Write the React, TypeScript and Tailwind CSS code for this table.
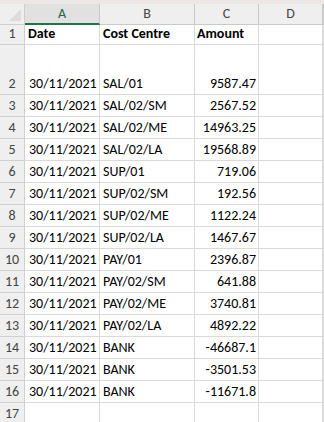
import React from 'react';

const rows: [string, string, string][] = [
  ['30/11/2021', 'SAL/01', '9587.47'],
  ['30/11/2021', 'SAL/02/SM', '2567.52'],
  ['30/11/2021', 'SAL/02/ME', '14963.25'],
  ['30/11/2021', 'SAL/02/LA', '19568.89'],
  ['30/11/2021', 'SUP/01', '719.06'],
  ['30/11/2021', 'SUP/02/SM', '192.56'],
  ['30/11/2021', 'SUP/02/ME', '1122.24'],
  ['30/11/2021', 'SUP/02/LA', '1467.67'],
  ['30/11/2021', 'PAY/01', '2396.87'],
  ['30/11/2021', 'PAY/02/SM', '641.88'],
  ['30/11/2021', 'PAY/02/ME', '3740.81'],
  ['30/11/2021', 'PAY/02/LA', '4892.22'],
  ['30/11/2021', 'BANK', '-46687.1'],
  ['30/11/2021', 'BANK', '-3501.53'],
  ['30/11/2021', 'BANK', '-11671.8'],
];

const cell = 'border-r border-b border-[#dadada] flex items-end pb-[2px] whitespace-nowrap overflow-hidden';
const rowHead =
  'border-r border-b border-[#cfcfcf] bg-[#efefef] flex items-end justify-center pb-[2px] text-[14px] text-[#444]';
const colHead =
  'border-r border-b border-[#c9c9c9] bg-[#efefef] flex items-center justify-center text-[14px] text-[#444]';

const App: React.FC = () => {
  return (
    <div className="w-[324px] h-[422px] overflow-hidden bg-white font-['Carlito','Liberation_Sans',Arial,sans-serif] text-[14px] leading-[16px] text-black">
      <div className="h-[4px] bg-[#ebe7e7]"></div>
      <div className="grid grid-cols-[25px_75px_95px_64px_64px_1fr] grid-rows-[21px_20px_50px_repeat(15,22px)]">
        {/* header row */}
        <div className="border-r border-b border-[#cfcfcf] bg-[#efefef] relative">
          <svg width="24" height="20" className="absolute left-0 top-0">
            <polygon points="9,17 21,17 21,5" fill="#dcdcdc" />
          </svg>
        </div>
        <div className="border-r border-[#c9c9c9] border-b-2 border-b-[#217346] bg-[#e1e1e1] flex items-center justify-center text-[14px] text-[#1f6b41]">
          A
        </div>
        <div className={colHead}>B</div>
        <div className={colHead}>C</div>
        <div className={colHead}>D</div>
        <div className={colHead}></div>

        {/* row 1 */}
        <div className={rowHead}>1</div>
        <div className={`${cell} pl-[3px] font-bold`}>Date</div>
        <div className={`${cell} pl-[3px] font-bold`}>Cost Centre</div>
        <div className={`${cell} pl-[2px] font-bold`}>Amount</div>
        <div className={cell}></div>
        <div className={cell}></div>

        {rows.map((r, i) => (
          <React.Fragment key={i}>
            <div className={rowHead}>{i + 2}</div>
            <div className={`${cell} pl-[4px]`}>{r[0]}</div>
            <div className={`${cell} pl-[3px]`}>{r[1]}</div>
            <div className={`${cell} justify-end pr-[2px]`}>{r[2]}</div>
            <div className={cell}></div>
            <div className={cell}></div>
          </React.Fragment>
        ))}

        {/* row 17 */}
        <div className={rowHead}>17</div>
        <div className={cell}></div>
        <div className={cell}></div>
        <div className={cell}></div>
        <div className={cell}></div>
        <div className={cell}></div>
      </div>
    </div>
  );
};

export default App;
